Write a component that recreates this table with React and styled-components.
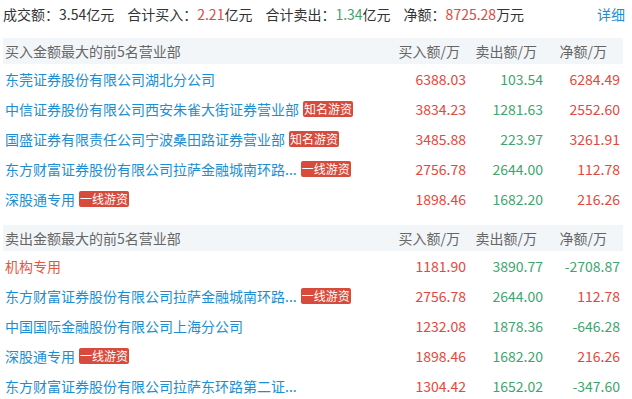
import React from "react"
import styled, { createGlobalStyle } from "styled-components"

const GlobalStyle = createGlobalStyle`
  body {
    margin: 0;
    background: #fff;
    font-family: "Noto Sans CJK SC", "Noto Sans", sans-serif;
    font-size: 14px;
    color: #333;
  }
`

const Page = styled.div`
  width: 632px;
  padding: 0 9px 0 3px;
  box-sizing: border-box;
`

const Summary = styled.div`
  display: flex;
  align-items: center;
  height: 28px;
  margin-bottom: 10px;
  color: #333;
`

const SumItem = styled.span`
  margin-right: 13px;
`

const Num = styled.span`
  color: ${p => (p.$up ? "#e5473c" : "#3ea56f")};
`

const Detail = styled.a`
  margin-left: auto;
  margin-right: -2px;
  color: #1b8fd3;
  text-decoration: none;
`

const Section = styled.div`
  margin-bottom: 11px;
`

const HeadRow = styled.div`
  display: grid;
  grid-template-columns: 1fr 77px 77px 77px;
  align-items: center;
  height: 26px;
  background: #f3f6f9;
  color: #666;
  padding: 0 3px 0 2px;
`

const HeadCell = styled.div`
  text-align: right;
  padding-right: ${p => p.$pr || 0}px;
`

const Row = styled.div`
  display: grid;
  grid-template-columns: 1fr 77px 77px 77px;
  align-items: center;
  height: 30px;
  padding: 0 3px 0 2px;
`

const Name = styled.div`
  display: flex;
  align-items: center;
  gap: 4px;
  color: ${p => (p.$org ? "#e8553e" : "#1b8fd3")};
  white-space: nowrap;
`

const Badge = styled.span`
  display: inline-block;
  background: #d84a3b;
  color: #fff;
  font-size: 12px;
  line-height: 16px;
  height: 16px;
  padding: 0 1px;
  border-radius: 2px;
`

const Cell = styled.div`
  text-align: right;
  color: ${p => (p.$up ? "#e5473c" : "#3ea56f")};
`

const buys = [
  { name: "东莞证券股份有限公司湖北分公司", buy: "6388.03", sell: "103.54", net: "6284.49" },
  { name: "中信证券股份有限公司西安朱雀大街证券营业部", tag: "知名游资", buy: "3834.23", sell: "1281.63", net: "2552.60" },
  { name: "国盛证券有限责任公司宁波桑田路证券营业部", tag: "知名游资", buy: "3485.88", sell: "223.97", net: "3261.91" },
  { name: "东方财富证券股份有限公司拉萨金融城南环路...", tag: "一线游资", buy: "2756.78", sell: "2644.00", net: "112.78" },
  { name: "深股通专用", tag: "一线游资", buy: "1898.46", sell: "1682.20", net: "216.26" },
]

const sells = [
  { name: "机构专用", org: true, buy: "1181.90", sell: "3890.77", net: "-2708.87" },
  { name: "东方财富证券股份有限公司拉萨金融城南环路...", tag: "一线游资", buy: "2756.78", sell: "2644.00", net: "112.78" },
  { name: "中国国际金融股份有限公司上海分公司", buy: "1232.08", sell: "1878.36", net: "-646.28" },
  { name: "深股通专用", tag: "一线游资", buy: "1898.46", sell: "1682.20", net: "216.26" },
  { name: "东方财富证券股份有限公司拉萨东环路第二证...", buy: "1304.42", sell: "1652.02", net: "-347.60" },
]

const Table = ({ title, rows }) => (
  <Section>
    <HeadRow>
      <div>{title}</div>
      <HeadCell $pr={6}>买入额/万</HeadCell>
      <HeadCell $pr={6}>卖出额/万</HeadCell>
      <HeadCell $pr={13}>净额/万</HeadCell>
    </HeadRow>
    {rows.map((r, i) => (
      <Row key={i}>
        <Name $org={r.org}>
          {r.name}
          {r.tag && <Badge>{r.tag}</Badge>}
        </Name>
        <Cell $up>{r.buy}</Cell>
        <Cell>{r.sell}</Cell>
        <Cell $up={!r.net.startsWith("-")}>{r.net}</Cell>
      </Row>
    ))}
  </Section>
)

export default function App() {
  return (
    <Page>
      <GlobalStyle />
      <Summary>
        <SumItem>成交额：3.54亿元</SumItem>
        <SumItem>合计买入：<Num $up>2.21</Num>亿元</SumItem>
        <SumItem>合计卖出：<Num>1.34</Num>亿元</SumItem>
        <SumItem>净额：<Num $up>8725.28</Num>万元</SumItem>
        <Detail href="#">详细</Detail>
      </Summary>
      <Table title="买入金额最大的前5名营业部" rows={buys} />
      <Table title="卖出金额最大的前5名营业部" rows={sells} />
    </Page>
  )
}
